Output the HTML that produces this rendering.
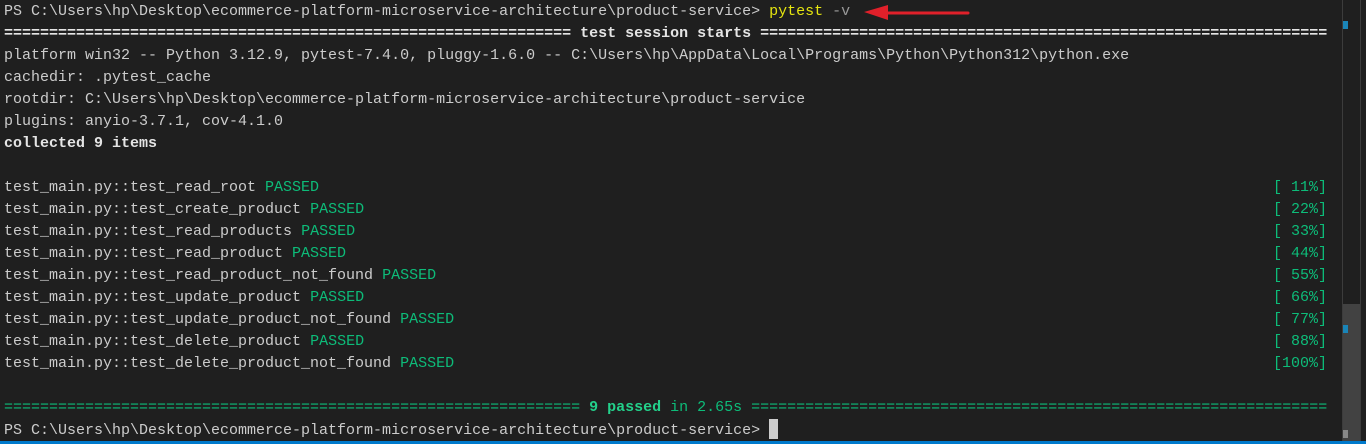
<!DOCTYPE html>
<html><head><meta charset="utf-8"><style>
html,body{margin:0;padding:0;background:#1f1f1f;width:1366px;height:444px;overflow:hidden;}
#t{position:absolute;left:4px;top:1px;width:1323px;font-family:"Liberation Mono",monospace;font-size:15px;line-height:22px;color:#cccccc;}
.l{height:22px;position:relative;white-space:pre;}
.r{position:absolute;right:0;top:0;color:#0dbc79;}
.g{color:#0dbc79}
.G{color:#23d18b;font-weight:bold}
.b{font-weight:bold;color:#e5e5e5}
.y{color:#e5e510}
.d{color:#999}
</style></head><body>
<div id="t"><div class="l">PS C:\Users\hp\Desktop\ecommerce-platform-microservice-architecture\product-service&gt; <span class="y">pytest</span> <span class="d">-v</span></div><div class="l b">=============================================================== test session starts ===============================================================</div><div class="l">platform win32 -- Python 3.12.9, pytest-7.4.0, pluggy-1.6.0 -- C:\Users\hp\AppData\Local\Programs\Python\Python312\python.exe</div><div class="l">cachedir: .pytest_cache</div><div class="l">rootdir: C:\Users\hp\Desktop\ecommerce-platform-microservice-architecture\product-service</div><div class="l">plugins: anyio-3.7.1, cov-4.1.0</div><div class="l b">collected 9 items</div><div class="l"></div><div class="l">test_main.py::test_read_root <span class="g">PASSED</span><span class="r">[ 11%]</span></div><div class="l">test_main.py::test_create_product <span class="g">PASSED</span><span class="r">[ 22%]</span></div><div class="l">test_main.py::test_read_products <span class="g">PASSED</span><span class="r">[ 33%]</span></div><div class="l">test_main.py::test_read_product <span class="g">PASSED</span><span class="r">[ 44%]</span></div><div class="l">test_main.py::test_read_product_not_found <span class="g">PASSED</span><span class="r">[ 55%]</span></div><div class="l">test_main.py::test_update_product <span class="g">PASSED</span><span class="r">[ 66%]</span></div><div class="l">test_main.py::test_update_product_not_found <span class="g">PASSED</span><span class="r">[ 77%]</span></div><div class="l">test_main.py::test_delete_product <span class="g">PASSED</span><span class="r">[ 88%]</span></div><div class="l">test_main.py::test_delete_product_not_found <span class="g">PASSED</span><span class="r">[100%]</span></div><div class="l"></div><div class="l g">================================================================ <span class="G">9 passed</span> in 2.65s ================================================================</div><div class="l">PS C:\Users\hp\Desktop\ecommerce-platform-microservice-architecture\product-service&gt; <span style="display:inline-block;width:9px;height:20px;background:#cccccc;vertical-align:-5px"></span></div></div>
<svg style="position:absolute;left:0;top:0" width="1366" height="444">
<line x1="885" y1="13" x2="968" y2="13" stroke="#e0202a" stroke-width="3" stroke-linecap="round"/>
<polygon points="864,12 888,5 888,20" fill="#e0202a"/>
<rect x="1342" y="0" width="1" height="441" fill="#3c3c3c"/>
<rect x="1360" y="0" width="1" height="441" fill="#3c3c3c"/>
<rect x="1343" y="304" width="17" height="137" fill="#424242"/>
<rect x="1343" y="21" width="5" height="8" fill="#1a85b8"/>
<rect x="1343" y="325" width="5" height="8" fill="#1a85b8"/>
<rect x="1343" y="430" width="5" height="8" fill="#888"/>
<rect x="0" y="441" width="1366" height="3" fill="#007acc"/>
</svg>
</body></html>
